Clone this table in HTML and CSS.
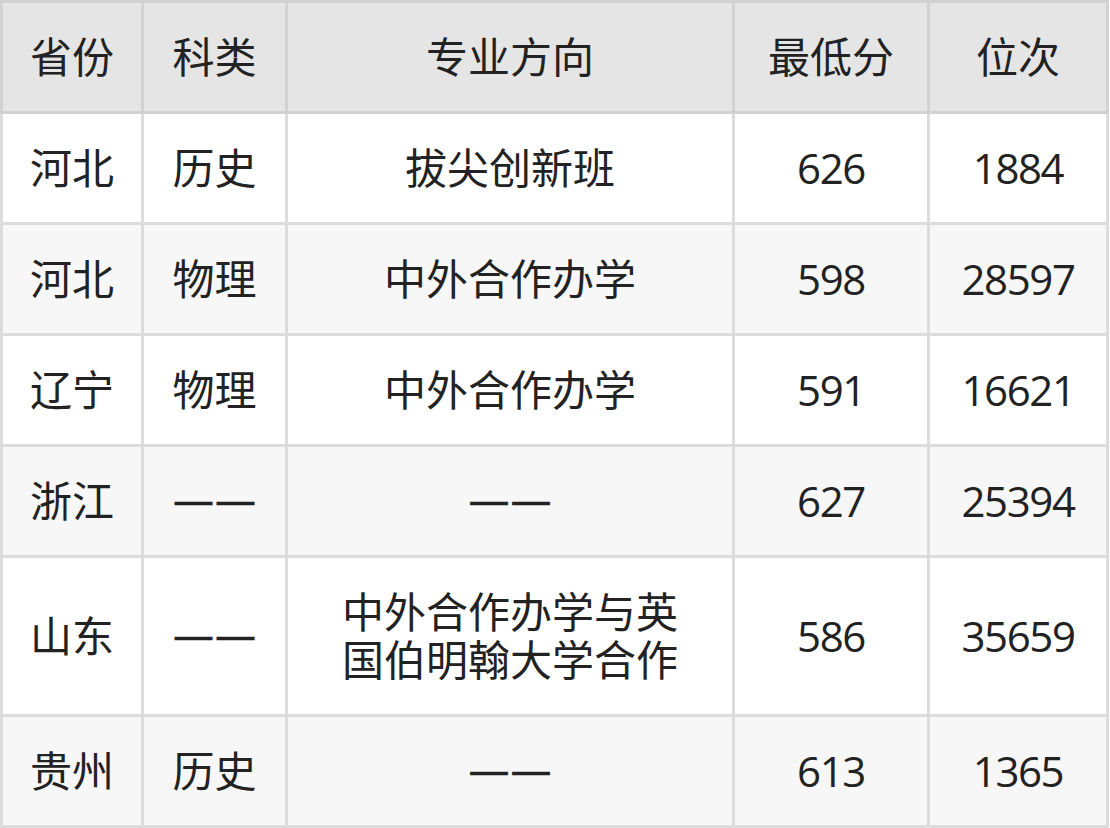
FILE: index.html
```html
<!DOCTYPE html>
<html lang="zh-CN">
<head>
<meta charset="utf-8">
<title>分数线</title>
<link rel="stylesheet" href="styles.css">
</head>
<body>
<div class="table">
  <div class="cell head first">省份</div>
  <div class="cell head">科类</div>
  <div class="cell head wide">专业方向</div>
  <div class="cell head">最低分</div>
  <div class="cell head">位次</div>

  <div class="cell first">河北</div>
  <div class="cell">历史</div>
  <div class="cell wide">拔尖创新班</div>
  <div class="cell num">626</div>
  <div class="cell num">1884</div>

  <div class="cell first alt">河北</div>
  <div class="cell alt">物理</div>
  <div class="cell wide alt">中外合作办学</div>
  <div class="cell num alt">598</div>
  <div class="cell num alt">28597</div>

  <div class="cell first">辽宁</div>
  <div class="cell">物理</div>
  <div class="cell wide">中外合作办学</div>
  <div class="cell num">591</div>
  <div class="cell num">16621</div>

  <div class="cell first alt">浙江</div>
  <div class="cell alt"><span class="dash">——</span></div>
  <div class="cell wide alt"><span class="dash">——</span></div>
  <div class="cell num alt">627</div>
  <div class="cell num alt">25394</div>

  <div class="cell first">山东</div>
  <div class="cell"><span class="dash">——</span></div>
  <div class="cell wide">中外合作办学与英国伯明翰大学合作</div>
  <div class="cell num">586</div>
  <div class="cell num">35659</div>

  <div class="cell first alt">贵州</div>
  <div class="cell alt">历史</div>
  <div class="cell wide alt"><span class="dash">——</span></div>
  <div class="cell num alt">613</div>
  <div class="cell num alt">1365</div>
</div>
</body>
</html>
```

FILE: styles.css
```css
html, body {
  margin: 0;
  padding: 0;
  background: #ffffff;
}

.table {
  display: grid;
  grid-template-columns: 144px 144px 447px 195px 179px;
  grid-template-rows: 114px 111px 111px 111px 111px 159px 111px;
  width: 1109px;
  font-family: "Open Sans", "Noto Sans CJK SC", sans-serif;
  font-size: 42px;
  line-height: 48px;
  color: #222222;
}

.cell {
  box-sizing: border-box;
  display: flex;
  align-items: center;
  justify-content: center;
  text-align: center;
  background: #ffffff;
  border-right: 3px solid #dcdcdc;
  border-bottom: 3px solid #dcdcdc;
}

.cell.first {
  border-left: 3px solid #dcdcdc;
}

.cell.alt {
  background: #f7f7f7;
}

.cell.head {
  background: #e5e5e5;
  border-top: 3px solid #d2d2d2;
  border-right-color: #d2d2d2;
  border-bottom-color: #d2d2d2;
}

.cell.head.first {
  border-left-color: #d2d2d2;
}

.cell.wide {
  padding: 0 40px;
}

.cell.num {
  letter-spacing: -1.4px;
}

.dash {
  font-family: "DejaVu Sans", sans-serif;
  font-size: 41.5px;
  letter-spacing: 0.5px;
  padding-left: 0.5px;
  line-height: 48px;
  -webkit-text-stroke: 0.5px #222222;
}
```
